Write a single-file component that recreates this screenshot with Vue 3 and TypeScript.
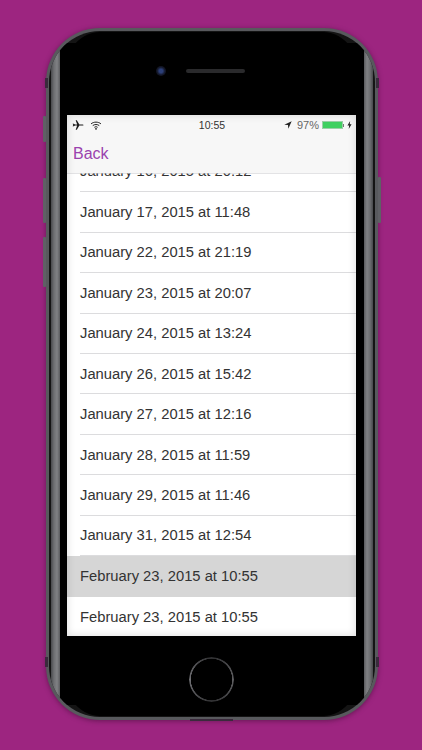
<script setup lang="ts">
const rows: string[] = [
  'January 16, 2015 at 20:12',
  'January 17, 2015 at 11:48',
  'January 22, 2015 at 21:19',
  'January 23, 2015 at 20:07',
  'January 24, 2015 at 13:24',
  'January 26, 2015 at 15:42',
  'January 27, 2015 at 12:16',
  'January 28, 2015 at 11:59',
  'January 29, 2015 at 11:46',
  'January 31, 2015 at 12:54',
  'February 23, 2015 at 10:55',
  'February 23, 2015 at 10:55',
]
const selectedIndex = 10
</script>

<template>
  <main class="stage">
    <div class="phone">
      <i class="btn mute"></i>
      <i class="btn vol-up"></i>
      <i class="btn vol-down"></i>
      <i class="btn power"></i>
      <i class="antenna a-tl"></i>
      <i class="antenna a-tr"></i>
      <i class="antenna a-bl"></i>
      <i class="antenna a-br"></i>
      <i class="antenna a-bottom"></i>
      <div class="glass-edge"><div class="band"></div></div>
      <div class="face">
        <div class="top-bezel">
          <span class="camera"></span>
          <span class="speaker"></span>
        </div>
        <div class="screen">
          <header class="bars">
            <div class="status">
              <div class="status-left">
                <svg class="plane" viewBox="0 0 14 12" width="12" height="10">
                  <path d="M0.5 4.6 L2 4.6 L3.4 5.3 L6 5.3 L4.2 0.4 L5.6 0.4 L8.6 5.3 L12 5.3 C13 5.3 13.6 5.6 13.6 6 C13.6 6.4 13 6.7 12 6.7 L8.6 6.7 L5.6 11.6 L4.2 11.6 L6 6.7 L3.4 6.7 L2 7.4 L0.5 7.4 L1.4 6 Z" fill="#1a1a1a" />
                </svg>
                <svg class="wifi" viewBox="0 0 13 10" width="12" height="9">
                  <path d="M1 3.2 C4 0.6 9 0.6 12 3.2 M2.9 5.1 C4.9 3.5 8.1 3.5 10.1 5.1 M4.7 7 C5.7 6.2 7.3 6.2 8.3 7" fill="none" stroke="#1f1f1f" stroke-width="1.1" />
                  <circle cx="6.5" cy="8.7" r="1" fill="#1f1f1f" />
                </svg>
              </div>
              <span class="time">10:55</span>
              <div class="status-right">
                <svg class="arrow" viewBox="0 0 10 10" width="8" height="8">
                  <path d="M9.6 0.4 L0.4 4.6 L5 5 L5.4 9.6 Z" fill="#222" />
                </svg>
                <span class="pct">97%</span>
                <span class="battery"><span class="level"></span></span>
                <span class="nub"></span>
                <svg class="bolt" viewBox="0 0 6 10" width="5" height="8">
                  <path d="M3.8 0 L0.4 5.6 L2.6 5.6 L2 10 L5.6 4 L3.3 4 Z" fill="#222" />
                </svg>
              </div>
            </div>
            <nav class="nav"><span class="back">Back</span></nav>
          </header>
          <ul class="list">
            <li v-for="(row, i) in rows" :key="i" class="row" :class="{ selected: i === selectedIndex }">
              <span class="label">{{ row }}</span>
            </li>
          </ul>
          <div class="edge-shade"></div>
        </div>
        <div class="bottom-bezel">
          <span class="home"></span>
        </div>
      </div>
    </div>
  </main>
</template>

<style>
html, body { margin: 0; background: #9d2580; }
</style>

<style scoped>
.stage {
  width: 422px;
  height: 750px;
  overflow: hidden;
  background: #9d2580;
  padding-top: 28px;
  box-sizing: border-box;
  font-family: "Liberation Sans", Arial, sans-serif;
}
.phone {
  position: relative;
  width: 332px;
  height: 692px;
  margin-left: 46px;
  box-sizing: border-box;
  padding: 4px 15px 4px 14px;
  border-radius: 54px;
  background: #58595d;
  box-shadow: 0 1px 5px rgba(50, 10, 40, 0.5);
  filter: blur(0.35px);
}
.glass-edge {
  position: absolute;
  inset: 3px;
  border-radius: 51px;
  overflow: hidden;
  background: #141414;
}
.band {
  position: absolute;
  left: 2px;
  right: 2px;
  top: 12px;
  bottom: 12px;
  background: linear-gradient(90deg, #48494c 0, #6e6f72 3px, #808184 6px, #5a5b5e 9px, #000 9px, #000 calc(100% - 9px), #5a5b5e calc(100% - 9px), #808184 calc(100% - 6px), #6e6f72 calc(100% - 3px), #48494c 100%);
}
.face {
  position: relative;
  height: 100%;
  box-sizing: border-box;
  padding: 0 7px;
  display: flex;
  flex-direction: column;
  align-items: stretch;
  border-radius: 40px / 54px;
  background: #000;
}
.top-bezel {
  height: 83px;
  flex: none;
  display: flex;
  align-items: flex-start;
  justify-content: center;
  padding-top: 34px;
  box-sizing: border-box;
  gap: 20px;
}
.camera {
  width: 10px;
  height: 10px;
  border-radius: 50%;
  margin-left: -23px;
  background: radial-gradient(circle, #2c3f78 0 25%, #14182a 55%, #0b0b10 100%);
}
.speaker {
  width: 59px;
  height: 4px;
  border-radius: 2px;
  margin-top: 3px;
  background: #2a2a2c;
}
.screen {
  position: relative;
  height: 521px;
  flex: none;
  display: flex;
  flex-direction: column;
  overflow: hidden;
  background: #fff;
}
.bars {
  flex: none;
  height: 58px;
  background: #f7f7f7;
  box-shadow: 0 1px 0 rgba(200, 200, 204, 0.5);
  box-sizing: border-box;
  display: flex;
  flex-direction: column;
  position: relative;
  z-index: 1;
}
.status {
  height: 20px;
  display: grid;
  grid-template-columns: 1fr auto 1fr;
  align-items: center;
  padding: 0 4px 0 5px;
  font-size: 11px;
  color: #333;
}
.status-left { display: flex; align-items: center; gap: 6px; }
.time { font-size: 10.5px; font-weight: 500; }
.status-right { display: flex; align-items: center; justify-content: flex-end; color: #666; }
.pct { margin-left: 5px; font-size: 11px; }
.battery {
  margin-left: 3px;
  width: 21px;
  height: 8px;
  box-sizing: border-box;
  border: 1px solid #9ccfa8;
  display: block;
}
.level { display: block; height: 100%; width: 100%; background: #3fd060; }
.nub { width: 1px; height: 3px; background: #777; margin-right: 3px; }
.nav {
  flex: 1;
  display: flex;
  align-items: center;
  padding-left: 6px;
}
.back {
  font-size: 16px;
  color: #9a42ae;
}
.list {
  list-style: none;
  margin: 0 0 -1px;
  padding: 0;
  flex: 1;
  min-height: 0;
  display: flex;
  flex-direction: column;
  justify-content: flex-end;
  overflow: hidden;
}
.row {
  flex: none;
  height: 40.45px;
  padding-left: 13px;
  display: flex;
}
.label {
  flex: 1;
  display: flex;
  align-items: center;
  font-size: 14.75px;
  color: #333;
  border-bottom: 1px solid #dcdcde;
}
.row:last-child .label { border-bottom: 0; }
.row.selected { background: #d6d6d6; }
.row.selected .label { border-bottom: 0; }
.edge-shade {
  position: absolute;
  inset: 0;
  z-index: 2;
  pointer-events: none;
  box-shadow: inset 0 0 8px rgba(0, 0, 0, 0.14);
}
.bottom-bezel {
  flex: 1;
  display: flex;
  justify-content: center;
  padding-top: 21px;
  box-sizing: border-box;
}
.home {
  width: 45px;
  height: 45px;
  border-radius: 50%;
  background: conic-gradient(#2e2e30, #5f5f62 90deg, #2e2e30 180deg, #707074 270deg, #2e2e30);
  -webkit-mask: radial-gradient(circle, transparent 20.4px, #000 20.9px);
  mask: radial-gradient(circle, transparent 20.4px, #000 20.9px);
}
.btn {
  position: absolute;
  background: #5f6065;
  border-radius: 1px;
}
.mute { left: -3px; top: 88px; width: 3px; height: 26px; }
.vol-up { left: -3px; top: 150px; width: 3px; height: 45px; }
.vol-down { left: -3px; top: 209px; width: 3px; height: 50px; }
.power { right: -3px; top: 149px; width: 3px; height: 46px; }
.antenna { position: absolute; background: #3a2a3c; }
.a-tl { left: -1px; top: 50px; width: 3px; height: 10px; }
.a-tr { right: -1px; top: 50px; width: 3px; height: 10px; }
.a-bl { left: -1px; top: 629px; width: 3px; height: 10px; }
.a-br { right: -1px; top: 629px; width: 3px; height: 10px; }
.a-bottom { left: 144px; bottom: -1px; width: 43px; height: 2px; }
</style>
